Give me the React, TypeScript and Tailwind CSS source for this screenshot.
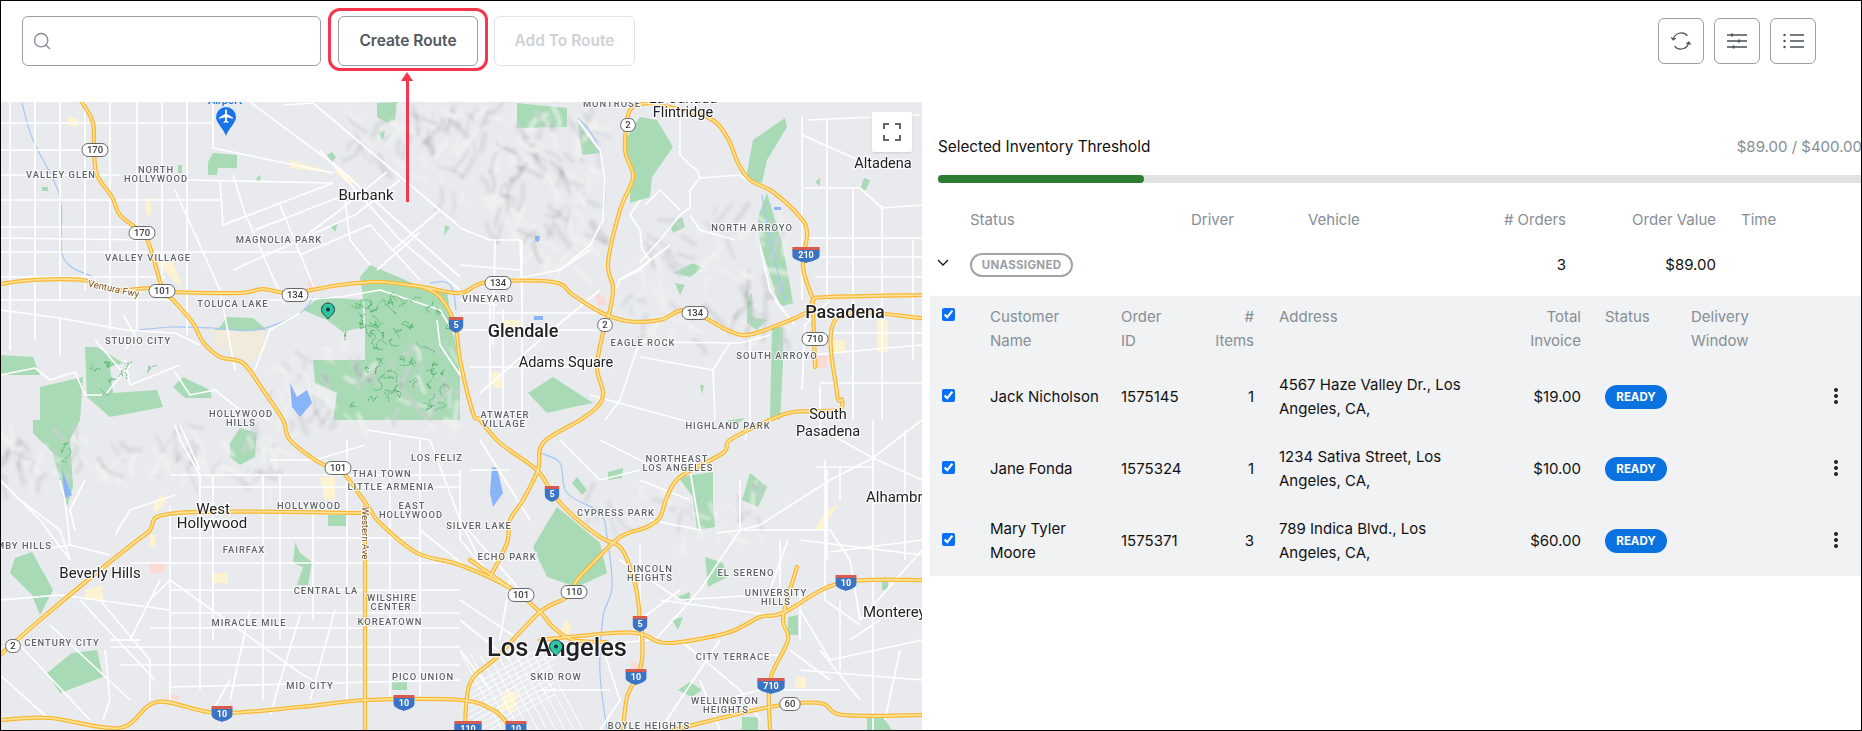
import type { ReactNode } from 'react'
import { Search } from 'lucide-react'

const FONT = "font-['Inter','Noto_Sans',sans-serif]"

// ---- map data, all in page coordinates ----
type Pt = [number, number]

const smooth = (pts: Pt[]) => {
  let d = `M${pts[0][0]} ${pts[0][1]}`
  for (let i = 0; i < pts.length - 1; i++) {
    const p0 = pts[i - 1] || pts[i]
    const p1 = pts[i]
    const p2 = pts[i + 1]
    const p3 = pts[i + 2] || p2
    const c1x = p1[0] + (p2[0] - p0[0]) / 6
    const c1y = p1[1] + (p2[1] - p0[1]) / 6
    const c2x = p2[0] - (p3[0] - p1[0]) / 6
    const c2y = p2[1] - (p3[1] - p1[1]) / 6
    d += ` C${c1x} ${c1y} ${c2x} ${c2y} ${p2[0]} ${p2[1]}`
  }
  return d
}

// fixed seed so the terrain is the same on every render
const seeded = (seed: number) => () => {
  seed = (seed * 16807) % 2147483647
  return seed / 2147483647
}

type Ridge = { d: string; dark: boolean; w: number }

const buildRidges = () => {
  const rand = seeded(4711)
  const out: Ridge[] = []
  const regions: { box: [number, number, number, number]; n: number; keep: (x: number, y: number) => boolean }[] = [
    { box: [330, 102, 600, 270], n: 260, keep: (x, y) => y - 135 < (x - 340) * 0.62 && x < 600 - (y - 102) * 0.05 },
    { box: [630, 200, 790, 340], n: 80, keep: (x, y) => y - 200 > (700 - x) * 0.4 },
    { box: [0, 425, 290, 480], n: 80, keep: () => true },
    { box: [270, 340, 460, 425], n: 60, keep: () => true },
    { box: [680, 480, 770, 545], n: 18, keep: () => true },
    { box: [585, 470, 660, 520], n: 12, keep: () => true },
  ]
  regions.forEach(({ box, n, keep }) => {
    for (let i = 0; i < n; i++) {
      const x = box[0] + rand() * (box[2] - box[0])
      const y = box[1] + rand() * (box[3] - box[1])
      if (!keep(x, y)) continue
      const len = 8 + rand() * 20
      const a = 0.2 + rand() * 2.2
      const mid: Pt = [x + (Math.cos(a) * len) / 2 + rand() * 6 - 3, y + (Math.sin(a) * len) / 2 + rand() * 6 - 3]
      const end: Pt = [x + Math.cos(a) * len, y + Math.sin(a) * len]
      out.push({ d: smooth([[x, y], mid, end]), dark: rand() > 0.45, w: 2 + rand() * 3.5 })
    }
  })
  return out
}

const buildTrails = () => {
  const rand = seeded(1234)
  const out: string[] = []
  const boxes: [number, number, number, number, number][] = [
    [345, 290, 450, 420, 46],
    [85, 362, 160, 395, 8],
    [52, 440, 72, 462, 2],
    [360, 300, 400, 340, 8],
  ]
  boxes.forEach(([x0, y0, x1, y1, n]) => {
    for (let i = 0; i < n; i++) {
      let x = x0 + rand() * (x1 - x0)
      let y = y0 + rand() * (y1 - y0)
      const pts = [`${x.toFixed(1)},${y.toFixed(1)}`]
      for (let s = 0; s < 5; s++) {
        x = Math.min(x1, Math.max(x0, x + rand() * 12 - 6))
        y = Math.min(y1, Math.max(y0, y + rand() * 12 - 6))
        pts.push(`${x.toFixed(1)},${y.toFixed(1)}`)
      }
      out.push(pts.join(' '))
    }
  })
  return out
}

const ridges = buildRidges()
const trails = buildTrails()

const freeways: Pt[][] = [
  // 170 into 101
  [[82,102],[93,123],[94,150],[97,175],[112,197],[120,215],[142,233],[150,247],[163,290],[173,300],[193,323],[203,342],[220,357],[243,363],[263,390],[283,420],[290,440],[320,463],[338,468],[347,477],[367,505],[380,523],[417,553],[460,565],[510,588],[540,612],[553,627],[573,640],[607,642]],
  // 134 west
  [[0,284],[33,280],[83,280],[113,290],[153,288],[173,292],[240,293],[263,289],[290,293],[340,285],[380,282],[423,287],[460,293],[487,282],[553,282],[573,295],[600,312],[627,321],[660,320],[687,310],[727,330],[747,335],[773,327],[807,312],[813,300],[827,297],[922,295]],
  // 5
  [[423,287],[440,297],[455,325],[460,360],[473,413],[480,420],[500,443],[537,470],[552,493],[570,513],[600,537],[620,547],[630,567],[637,593],[640,620],[642,633],[642,660],[637,677],[627,697],[623,730]],
  // 2
  [[650,103],[630,110],[625,150],[633,177],[620,210],[608,263],[613,287],[610,310],[603,333],[597,367],[603,393],[597,407],[580,420],[543,443],[538,470],[523,500],[510,520],[507,543],[490,577]],
  // 210
  [[650,103],[707,117],[727,137],[738,163],[750,180],[773,192],[800,217],[807,233],[803,267],[812,297]],
  // 710 stub
  [[813,303],[815,367]],
  // pasadena east
  [[922,318],[837,318],[837,393],[842,400],[837,410],[793,412],[770,420],[730,440],[723,453],[680,477],[667,497],[660,517],[647,527],[620,537],[593,563],[577,580],[567,597],[540,612],[497,657],[470,683],[465,730]],
  // sunset style diagonal
  [[367,513],[177,513],[147,533],[100,570],[40,620],[0,655]],
  // western
  [[365,507],[365,730]],
  // 10 west
  [[0,720],[50,718],[120,728],[157,702],[217,713],[300,707],[367,700],[460,700],[493,710],[507,723]],
  // 10 east
  [[540,640],[613,633],[642,634],[667,643],[727,633],[760,617],[783,613],[840,583],[922,580]],
  // 710 south
  [[797,567],[783,617],[788,640],[770,680],[770,730]],
  // 60
  [[673,730],[770,707],[820,703],[843,715],[922,715]],
  // 101 south
  [[510,588],[470,560]],
]

const parks: string[] = [
  '208,162 213,153 237,155 237,168 218,168 217,175 208,175',
  '327,155 332,152 336,157 332,162',
  '377,103 397,102 395,120 387,123 377,117',
  '377,132 385,130 383,140',
  '313,360 365,360 365,310 360,277 370,265 417,285 447,290 450,313 460,370 460,420 333,420 337,393 315,383',
  '303,310 320,297 363,300 363,327 343,332 327,320',
  '220,327 227,317 253,318 267,330 213,330',
  '40,387 83,377 80,420 40,420',
  '85,347 97,347 123,363 110,367 113,393 157,390 163,407 110,417 87,397',
  '33,420 80,420 70,440 73,487 67,507 53,453 33,433',
  '0,355 33,357 40,375 0,375',
  '230,443 240,428 257,433 255,457 240,465 230,457',
  '173,387 183,377 210,390 212,398 185,398',
  '517,103 567,108 567,127 517,128',
  '578,123 600,153 582,155',
  '627,137 640,117 657,120 673,147 652,177 650,197 630,203 630,190 635,177 625,150',
  '747,173 753,140 785,118 787,127 767,160 762,183 747,180',
  '758,217 767,193 783,247 793,303 780,307 760,243',
  '670,225 682,217 685,227 673,233',
  '673,273 693,263 702,268 690,277',
  '675,283 685,285 680,295',
  '747,300 752,293 753,317 767,320 757,330 747,323',
  '772,327 783,327 783,363 780,420 770,417',
  '528,393 553,377 593,403 573,407 547,413',
  '15,558 32,552 53,590 40,615 32,595 10,573',
  '72,653 97,650 103,677 60,693 47,673',
  '295,542 300,553 312,562 308,585 297,585 303,567 293,563',
  '328,515 346,515 346,526 328,526',
  '392,680 407,680 407,690 392,690',
  '557,507 600,543 607,573 577,587 547,577 533,547 543,530',
  '678,477 713,472 713,507 715,527 697,530 693,497',
  '750,473 767,487 758,507 742,500',
  '705,557 723,563 727,577 708,587',
  '608,472 623,468 622,478 608,480',
  '572,483 577,477 587,490 582,495',
  '677,597 690,592 690,602',
  '672,620 683,617 678,630',
  '678,690 690,682 702,690 692,697',
  '788,617 798,615 798,635 788,635',
  '742,717 758,717 758,730 742,730',
  '867,718 883,717 892,730 867,730',
  '42,187 48,187 48,191 42,191',
  '178,165 182,165 182,173 178,173',
  '257,177 261,175 260,181 256,182',
  '330,225 338,223 335,232',
  '445,225 450,227 444,236',
  '815,182 820,178 820,186',
  '860,190 864,178 870,180 866,190',
  '800,252 806,252 806,262 800,262',
  '882,580 888,580 888,590 882,590',
  '700,385 704,385 702,395',
  '725,421 745,418 735,425',
]

const beige: string[] = [
  '290,160 325,170 325,172 290,168',
  '335,165 355,180 350,185 335,172',
  '68,118 78,118 78,126 68,126',
  '145,198 150,198 152,215 147,215',
  '155,260 173,262 182,285 178,285',
  '830,340 845,340 845,352 830,352',
  '877,320 888,320 888,352 877,352',
  '503,320 520,320 520,335 503,335',
  '490,372 500,372 503,388 494,388',
  '85,590 102,585 103,600 85,600',
  '212,573 228,573 228,583 212,583',
  '150,535 155,535 155,547 150,547',
  '320,477 335,477 335,500 325,500',
  '795,677 806,677 806,688 795,688',
  '826,510 838,505 822,530 815,530',
  '505,690 518,694 514,712 500,710',
  '565,620 572,625 566,640 560,635',
  '160,495 167,500 156,513 152,508',
]

const pinks = ['307,283 312,278 316,292 310,292', '596,295 603,295 607,305 598,305', '817,356 827,356 827,368 817,368', '150,563 165,563 165,573 150,573', '168,694 180,696 178,700 166,698', '630,660 640,665 632,672']

const water = ['492,467 497,468 503,493 493,507 490,493', '290,383 297,397 307,390 312,403 300,417 292,407', '62,470 72,495 65,498', '534,316 543,316 543,320 534,320', '774,207 781,207 781,210 774,210', '535,236 540,236 539,242 535,241']

const rivers: Pt[][] = [
  [[137,330],[173,327],[213,328],[257,330],[300,313],[313,297]],
  [[22,103],[33,140],[60,197],[63,257],[93,277]],
  [[540,453],[560,463],[567,493],[600,513],[607,537],[612,587],[603,617],[600,673],[607,730]],
  [[578,118],[595,140],[605,180],[603,220]],
  [[430,283],[445,282],[453,290],[456,310]],
  [[762,195],[770,240],[785,300]],
]

const roads: string[] = [
  // valley grid, verticals
  '10,102 10,350', '35,102 35,340', '60,102 60,300', '85,102 85,290', '110,102 110,330', '137,102 137,330', '162,102 162,300', '187,102 187,335', '213,102 213,148',
  // valley grid, horizontals
  '0,123 82,123 213,123', '0,150 95,150', '0,175 120,175', '0,200 220,200', '0,227 150,227', '0,238 150,240', '0,252 300,252', '0,277 165,277', '0,300 175,300',
  // burbank diagonals
  '283,105 313,103 460,227', '250,102 335,165 460,277', '213,148 333,173', '223,225 333,183', '220,182 223,225', '187,180 333,183',
  '387,172 340,210 300,240', '420,232 377,270', '440,210 393,250', '400,180 355,215 233,270', '320,150 400,240 460,290', '345,200 350,240 370,265',
  '248,220 285,305', '280,205 315,290', '233,175 247,220', '175,190 220,290 235,370', '255,230 345,195', '300,255 370,225 420,280',
  // toluca / studio city
  '0,310 60,318 125,330 175,333 200,345', '123,315 135,335 125,350', '60,318 60,355', '95,340 125,375', '125,360 130,385 180,365',
  // griffith edges, mulholland
  '270,300 300,300 340,297 380,290', '380,290 440,310 458,340', '437,320 440,345 460,375 460,365', '300,313 270,330 255,370',
  '0,375 35,368 50,380 75,372 85,395 105,395 130,365', '175,372 190,395 215,390 240,410 270,420',
  // verdugo side
  '578,120 600,150 605,180 603,220 590,245 560,270 510,280', '460,228 490,240 520,240 522,300', '460,265 520,270',
  '495,240 493,345', '522,240 522,420', '560,270 590,250',
  '640,200 630,215 640,230 642,250 650,260 640,270 620,280 615,290', '680,115 680,155 690,165 697,170 700,178 690,190 690,208 680,215 660,240 640,262',
  '700,178 740,175 747,180', '690,215 700,230 735,240', '645,205 660,190 680,210',
  // glendale
  '460,313 600,313', '460,330 600,330', '470,367 597,367', '460,300 497,305', '490,300 490,420', '503,310 503,420', '480,393 540,340 600,290',
  '618,280 640,268 670,245', '640,342 740,343 770,335', '640,340 620,400 605,420', '640,357 713,370 715,420', '713,370 730,343', '590,395 700,425', '750,340 750,420 745,440',
  // pasadena
  '802,117 802,300', '827,120 827,300', '853,190 853,420', '882,205 882,420', '913,240 913,360', '805,188 860,188 882,208 922,205', '802,135 870,165', '808,120 920,115',
  '802,238 922,238', '810,257 922,257', '815,277 922,277', '810,333 922,333', '810,355 922,345', '820,383 922,383', '830,300 805,325 802,390', '775,300 795,325',
  '760,245 770,290 790,320', '820,385 820,440',
  // mid city grid
  '170,475 460,475', '200,487 460,487', '170,538 420,538', '130,563 460,563', '170,590 460,590', '170,613 460,613', '150,628 460,628', '110,647 460,647', '120,665 460,665', '170,687 460,680',
  '170,505 170,700', '200,475 200,690', '213,475 213,640', '263,475 263,700', '280,475 280,640', '313,510 313,620', '347,440 347,700', '390,440 390,700', '420,440 420,700',
  '200,475 180,440 175,425', '270,460 315,460 365,445', '367,430 430,440',
  // beverly hills
  '170,580 300,673 330,690', '0,600 60,595 170,610', '40,550 70,545 110,555', '115,535 130,510 175,495', '70,545 65,500 60,480', '0,480 40,520 70,560',
  '0,675 50,720', '15,640 90,720', '50,625 130,700', '80,600 155,680', '100,600 150,660 150,700', '110,640 140,640', '160,580 130,640', '150,600 170,580',
  '105,650 110,700 103,720', '250,610 230,700', '300,615 270,715', '335,610 310,700', '230,680 210,715',
  // hollywood hills
  '0,480 20,500 60,530 70,560', '180,425 200,470', '85,480 70,510 75,530',
  // silver lake / east
  '430,440 460,520 480,560', '460,470 460,540', '480,440 530,520', '420,530 470,570', '510,580 500,640', '470,470 510,470', '560,440 600,480 640,470', '600,440 660,470',
  '640,545 640,640', '650,520 700,530', '700,530 690,470', '740,480 740,530 700,590 655,640', '717,533 740,530 760,525 830,480 873,458 922,420', '823,430 873,458 922,480', '827,470 827,560', '873,420 873,730', '830,552 922,540', '817,467 873,467', '840,467 840,500', '740,530 830,530 850,560',
  '788,540 770,590', '660,600 770,615', '680,640 740,690 760,720', '700,680 720,730', '720,640 680,700', '800,540 922,555', '825,460 825,600 860,625',
  '850,560 860,620 922,550', '800,610 830,660 922,640', '850,640 880,620', '820,650 860,700', '790,650 830,680', '800,670 922,680', '770,690 840,690', '730,655 780,655', '900,650 885,720',
  '620,560 680,600 760,595', '640,620 680,590', '780,540 780,600', '640,480 690,500', '800,590 800,640', '840,600 840,670', '905,430 905,560', '680,700 660,730', '720,700 760,690',
  // arterial near downtown
  '460,520 520,590', '460,540 495,580', '460,600 520,640', '460,620 510,660', '460,650 490,690', '540,650 650,640', '540,690 610,690', '600,640 620,700 600,730',
]

const labels: [string, number, number][] = [
  ['MONTROSE',612,107],['VALLEY GLEN',61,178],['NORTH',156,173],['HOLLYWOOD',156,182],['MAGNOLIA PARK',279,243],['VALLEY VILLAGE',148,261],['TOLUCA LAKE',233,307],['STUDIO CITY',138,344],
  ['HOLLYWOOD',241,417],['HILLS',241,426],['NORTH ARROYO',752,231],['VINEYARD',488,302],['EAGLE ROCK',643,346],['SOUTH ARROYO',777,359],['ATWATER',505,418],['VILLAGE',504,427],
  ['LOS FELIZ',437,461],['THAI TOWN',382,477],['LITTLE ARMENIA',391,490],['EAST',412,509],['HOLLYWOOD',411,518],['HOLLYWOOD',309,509],['FAIRFAX',244,553],['CENTRAL LA',326,594],['WILSHIRE',392,601],['CENTER',391,610],
  ['KOREATOWN',390,625],['MIRACLE MILE',249,626],['CENTURY CITY',62,646],['PICO UNION',423,680],['MID CITY',310,689],['SILVER LAKE',479,529],['HIGHLAND PARK',728,429],['NORTHEAST',677,462],['LOS ANGELES',678,471],
  ['CYPRESS PARK',616,516],['ECHO PARK',507,560],['LINCOLN',650,572],['HEIGHTS',650,581],['EL SERENO',746,576],['UNIVERSITY',776,596],['HILLS',776,605],['SKID ROW',556,680],['CITY TERRACE',733,660],['WELLINGTON',725,704],['HEIGHTS',726,713],['BOYLE HEIGHTS',649,729],
]

// text, x, baseline, size, weight, anchor
const cities: [string, number, number, number, number, 'middle' | 'start'][] = [
  ['La Cañada',683,103,14.5,400,'middle'],['Flintridge',683,117,14.5,400,'middle'],['Burbank',366,200,15,400,'middle'],['Altadena',883,168,14.5,400,'middle'],['Pasadena',845,318,18,500,'middle'],['Glendale',523,337,18,500,'middle'],
  ['Adams Square',566,367,14.5,400,'middle'],['South',828,419,14.5,400,'middle'],['Pasadena',828,436,14.5,400,'middle'],['West',213,514,15,400,'middle'],['Hollywood',212,528,15,400,'middle'],['Beverly Hills',100,578,15,400,'middle'],
  ['Alhambra',866,502,15,400,'start'],['Monterey',863,617,15,400,'start'],['Los Angeles',557,656,25.5,500,'middle'],
]

const usShields: [string, number, number][] = [
  ['170',95,150],['170',142,233],['101',162,291],['101',338,468],['101',521,595],['134',295,295],['134',498,283],['134',695,313],['2',628,125],['2',605,325],['2',13,646],['710',815,339],['110',574,592],['60',790,704],
]
const iShields: [string, number, number][] = [
  ['5',456,324],['5',552,493],['5',640,623],['210',806,254],['10',222,713],['10',404,702],['10',636,676],['10',516,728],['10',846,582],['710',771,685],['110',468,728],
]

function Pin({ x, y }: { x: number; y: number }) {
  return (
    <g transform={`translate(${x} ${y})`}>
      <path d="M0 8C-3 4.5-6.5 2-6.5-1.5a6.5 6.5 0 0 1 13 0C6.5 2 3 4.5 0 8Z" fill="#2fc4a2" stroke="#24384a" strokeWidth="1" />
      <circle cx="0" cy="-1.5" r="2" fill="#1d3444" />
    </g>
  )
}

function MapCanvas() {
  return (
    <svg viewBox="1 102 921 629" className="block w-[921px] h-[629px]">
      <defs>
        <filter id="soft">
          <feGaussianBlur stdDeviation="1.5" />
        </filter>
      </defs>
      <rect x="0" y="102" width="922" height="629" fill="#e8eaed" />
      {parks.map((p, i) => (
        <polygon key={i} points={p} fill="#a8dab5" />
      ))}
      <g filter="url(#soft)" fill="none" strokeLinecap="round" opacity="0.6">
        {ridges.map((r, i) => (
          <path key={i} d={r.d} stroke={r.dark ? '#cfd1d5' : '#f4f4f1'} strokeWidth={r.w} style={{ mixBlendMode: r.dark ? 'multiply' : 'normal' }} />
        ))}
      </g>
      {beige.map((p, i) => (
        <polygon key={i} points={p} fill="#fdf3d0" />
      ))}
      <polygon points="213,330 263,330 265,350 250,363 213,343" fill="#f1ebdc" />
      {pinks.map((p, i) => (
        <polygon key={i} points={p} fill="#fbd9d5" />
      ))}
      {water.map((p, i) => (
        <polygon key={i} points={p} fill="#8ab4f8" />
      ))}
      {rivers.map((r, i) => (
        <path key={i} d={smooth(r)} fill="none" stroke="#a6c6f5" strokeWidth="1.2" />
      ))}
      <g fill="none" stroke="#ffffff" strokeWidth="1.7" strokeLinejoin="round">
        {roads.map((r, i) => (
          <polyline key={i} points={r} />
        ))}
        {/* downtown grid */}
        {Array.from({ length: 10 }, (_, i) => (
          <line key={i} x1={462 + i * 9} y1={655} x2={502 + i * 9} y2={730} strokeWidth="1" />
        ))}
        {Array.from({ length: 10 }, (_, i) => (
          <line key={i} x1={465} y1={690 + i * 6} x2={555} y2={640 + i * 6} strokeWidth="1" />
        ))}
      </g>
      <g fill="none" stroke="#34a853" strokeWidth="0.7" strokeDasharray="2 0.8">
        {trails.map((t, i) => (
          <polyline key={i} points={t} />
        ))}
      </g>
      <g fill="none" strokeLinejoin="round" strokeLinecap="round">
        {freeways.map((f, i) => (
          <path key={i} d={smooth(f)} stroke="#fbb731" strokeWidth="4.2" />
        ))}
        {freeways.map((f, i) => (
          <path key={i} d={smooth(f)} stroke="#fee39a" strokeWidth="1.7" />
        ))}
      </g>
      <text x="113" y="292" transform="rotate(12 113 292)" textAnchor="middle" fontSize="9.5" fontFamily="Roboto" fill="#7a4a12" stroke="#fff" strokeWidth="2" paintOrder="stroke">Ventura Fwy</text>
      <text x="362" y="533" transform="rotate(90 362 533)" textAnchor="middle" fontSize="9.5" fontFamily="Roboto" fill="#7a4a12" stroke="#fff" strokeWidth="2" paintOrder="stroke">Western Ave</text>
      <g fontFamily="Roboto" fontWeight="500" fontSize="9.4" letterSpacing="1" textAnchor="middle" fill="#5f6368" stroke="#ffffff" strokeWidth="2" strokeOpacity="0.8" paintOrder="stroke">
        {labels.map(([t, x, y], i) => (
          <text key={i} x={x} y={y}>{t}</text>
        ))}
        <text x="52" y="549" textAnchor="end">HOLMBY HILLS</text>
      </g>
      <g fontFamily="Roboto" fill="#202124" stroke="#ffffff" strokeWidth="2.4" strokeOpacity="0.85" paintOrder="stroke">
        {cities.map(([t, x, y, s, w, a], i) => (
          <text key={i} x={x} y={y} fontSize={s} fontWeight={w} textAnchor={a}>{t}</text>
        ))}
      </g>
      {usShields.map(([t, x, y], i) => {
        const w = t.length * 5.6 + 9
        return (
          <g key={i}>
            <rect x={x - w / 2} y={y - 6.5} width={w} height={13} rx={6} fill="#fff" stroke="#55595e" strokeWidth="0.9" />
            <text x={x} y={y + 3.4} fontFamily="Roboto" fontWeight="500" fontSize="9.5" textAnchor="middle" fill="#3c4043">{t}</text>
          </g>
        )
      })}
      {iShields.map(([t, x, y], i) => {
        const h = t.length * 3.2 + 4
        return (
          <g key={i}>
            <path d={`M${x - h} ${y - 5}H${x + h}V${y + 2}C${x + h} ${y + 6} ${x + 2} ${y + 8} ${x} ${y + 9}C${x - 2} ${y + 8} ${x - h} ${y + 6} ${x - h} ${y + 2}Z`} fill="#3a74c4" />
            <rect x={x - h} y={y - 7} width={h * 2} height={3} fill="#d65a50" />
            <text x={x} y={y + 4} fontFamily="Roboto" fontWeight="700" fontSize="9" textAnchor="middle" fill="#fff">{t}</text>
          </g>
        )
      })}
      {/* airport */}
      <text x="225" y="104" textAnchor="middle" fontFamily="Roboto" fontWeight="500" fontSize="11" fill="#1a73e8">Airport</text>
      <g transform="translate(226 117)">
        <path d="M0 19C-2 12-10 6-10 0a10 10 0 0 1 20 0C10 6 2 12 0 19Z" fill="#1a73e8" />
        <path d="M-.9-6.5c0-1.3 1.8-1.3 1.8 0V-3l6 3.4v1.4L.9.2v3.5l1.6 1.3V6L0 5.3-2.5 6V5l1.6-1.3V.2L-6.9 1.8V.4l6-3.4Z" fill="#fff" />
      </g>
      <Pin x={328} y={311} />
      <Pin x={556} y={648} />
    </svg>
  )
}

function IconButton({ children }: { children: ReactNode }) {
  return (
    <button className="w-[46px] h-[46px] border border-[#9aa0a6] rounded-[6px] flex items-center justify-center bg-white">
      {children}
    </button>
  )
}

const orders = [
  { name: 'Jack Nicholson', id: '1575145', items: '1', address: '4567 Haze Valley Dr., Los Angeles, CA,', total: '$19.00' },
  { name: 'Jane Fonda', id: '1575324', items: '1', address: '1234 Sativa Street, Los Angeles, CA,', total: '$10.00' },
  { name: 'Mary Tyler Moore', id: '1575371', items: '3', address: '789 Indica Blvd., Los Angeles, CA,', total: '$60.00' },
]

const tableCols = 'grid grid-cols-[60px_131px_91px_42px_226px_101px_110px_119px_1fr]'

export default function App() {
  return (
    <div className={`${FONT} relative w-[1862px] h-[731px] border border-black bg-white overflow-hidden text-[15px] leading-6 text-[#111]`}>
      {/* Toolbar */}
      <div className="h-[101px] flex pl-[21px] pr-[45px] pt-[15px]">
        <div className="w-[299px] h-[50px] border border-[#9aa0a6] rounded-[6px] flex items-center pl-[9px]">
          <Search className="w-5 h-5 text-[#868e96]" strokeWidth={1.7} />
        </div>
        <button className="ml-[17px] w-[140px] h-[50px] border border-[#9aa0a6] rounded-[6px] text-[15.5px] font-semibold text-[#50575d]">
          Create Route
        </button>
        <button className="ml-[16px] w-[141px] h-[50px] border border-[#e1e3e5] rounded-[6px] text-[15.5px] font-semibold text-[#ced2d6]">
          Add To Route
        </button>
        <div className="ml-auto flex gap-[10px] pt-[2px]">
          <IconButton>
            <svg viewBox="0 0 24 24" className="w-[22px] h-[22px]" fill="none" stroke="#495057" strokeWidth="1.3">
              <path d="M3.5 10.5A8.8 8.8 0 0 1 19 6.5" />
              <path d="M20.5 13.5A8.8 8.8 0 0 1 5 17.5" />
              <path d="M1.5 8l2 2.7 2.7-2M22.5 16l-2-2.7-2.7 2" />
            </svg>
          </IconButton>
          <IconButton>
            <svg viewBox="0 0 20 16" className="w-[20px] h-[16px]" fill="none" stroke="#495057" strokeWidth="1.3">
              <path d="M0 2h20M0 8h20M0 14h20" />
              <path d="M5 .5v3M12 6.5v3M6.5 12.5v3" strokeWidth="1.8" />
            </svg>
          </IconButton>
          <IconButton>
            <svg viewBox="0 0 21 16" className="w-[21px] h-[16px]" fill="none" stroke="#495057" strokeWidth="1.3">
              <path d="M7 2h14M7 8h14M7 14h14" />
              <circle cx="1.5" cy="2" r="1.2" fill="#495057" stroke="none" />
              <circle cx="1.5" cy="8" r="1.2" fill="#495057" stroke="none" />
              <circle cx="1.5" cy="14" r="1.2" fill="#495057" stroke="none" />
            </svg>
          </IconButton>
        </div>
      </div>

      <div className="flex">
        {/* Map */}
        <div className="relative w-[921px] h-[629px] shrink-0 overflow-hidden">
          <MapCanvas />
          <button className="absolute left-[871px] top-[10px] w-10 h-10 bg-white rounded-[2px] shadow flex items-center justify-center">
            <svg viewBox="0 0 18 18" className="w-[18px] h-[18px]" fill="none" stroke="#666" strokeWidth="2">
              <path d="M1 6V1h5M12 1h5v5M17 12v5h-5M6 17H1v-5" />
            </svg>
          </button>
        </div>

        {/* Inventory and route */}
        <div className="flex-1 min-w-0 overflow-hidden pt-[33px]">
          <div className="flex pl-4 whitespace-nowrap">
            <span className="text-[15.3px]">Selected Inventory Threshold</span>
            <span className="ml-auto mr-[-1px] text-[#868e96]">$89.00 / $400.00</span>
          </div>
          <div className="ml-4 mt-[16px] h-2 bg-[#e2e2e2]">
            <div className="w-[206px] h-2 rounded-full bg-[#2e7d32]" />
          </div>

          <div className="mt-[25px] grid grid-cols-[48px_221px_117px_112px_146px_150px_1fr] text-[#868e96]">
            <span />
            <span>Status</span>
            <span>Driver</span>
            <span>Vehicle</span>
            <span className="text-right"># Orders</span>
            <span className="text-right">Order Value</span>
            <span className="pl-[25px]">Time</span>
          </div>
          <div className="mt-[21px] grid grid-cols-[48px_221px_117px_112px_146px_150px_1fr] items-center h-6">
            <svg viewBox="0 0 12 8" className="w-3 h-2 ml-[15px] mb-1" fill="none" stroke="#111" strokeWidth="1.3">
              <path d="M1 1l5 5 5-5" />
            </svg>
            <span className="w-[103px] h-6 rounded-full border-2 border-[#9fa6ab] text-[#9aa0a6] text-[11.5px] font-bold tracking-[0.3px] flex items-center justify-center">
              UNASSIGNED
            </span>
            <span />
            <span />
            <span className="text-right">3</span>
            <span className="text-right">$89.00</span>
            <span />
          </div>

          {/* Order table */}
          <div className="ml-2 mt-[19px] bg-[#f1f2f4]">
            <div className={`${tableCols} h-[64px] pt-[9px] text-[#868e96]`}>
              <div className="pl-3 pt-[3px]">
                <input type="checkbox" checked readOnly className="block w-[13px] h-[13px] accent-[#0b6ff5]" />
              </div>
              <span className="w-[90px]">Customer Name</span>
              <span className="w-[50px]">Order ID</span>
              <span className="text-right"># Items</span>
              <span className="pl-[25px]">Address</span>
              <span className="text-right pl-10">Total Invoice</span>
              <span className="pl-[24px]">Status</span>
              <span className="w-[70px]">Delivery Window</span>
              <span />
            </div>
            {orders.map((o) => (
              <div key={o.id} className={`${tableCols} h-[72px] pt-[2px] items-center`}>
                <div className="pl-3 pb-[3px]">
                  <input type="checkbox" checked readOnly className="block w-[13px] h-[13px] accent-[#0b6ff5]" />
                </div>
                <span className="pr-2">{o.name}</span>
                <span>{o.id}</span>
                <span className="text-right">{o.items}</span>
                <span className="pl-[25px]">{o.address}</span>
                <span className="text-right">{o.total}</span>
                <div className="pl-[24px]">
                  <span className="w-[62px] h-6 rounded-full bg-[#0a73e0] text-white text-[11.5px] font-bold flex items-center justify-center">
                    READY
                  </span>
                </div>
                <span />
                <div className="flex flex-col items-center gap-[2px] pb-[2px]">
                  <span className="w-1 h-1 rounded-full bg-[#222]" />
                  <span className="w-1 h-1 rounded-full bg-[#222]" />
                  <span className="w-1 h-1 rounded-full bg-[#222]" />
                </div>
              </div>
            ))}
          </div>
        </div>
      </div>

      {/* Annotation around the Create Route button */}
      <div className="absolute left-[327px] top-[7px] w-[160px] h-[63px] rounded-[12px] border-[3px] border-[#f5364f]" />
      <div className="absolute left-[405px] top-[78px] w-[3px] h-[123px] bg-[#f5364f]" />
      <svg viewBox="0 0 12 9" className="absolute left-[400px] top-[71px] w-[12px] h-[9px]">
        <path d="M6 0l6 9H0Z" fill="#f5364f" />
      </svg>
    </div>
  )
}
